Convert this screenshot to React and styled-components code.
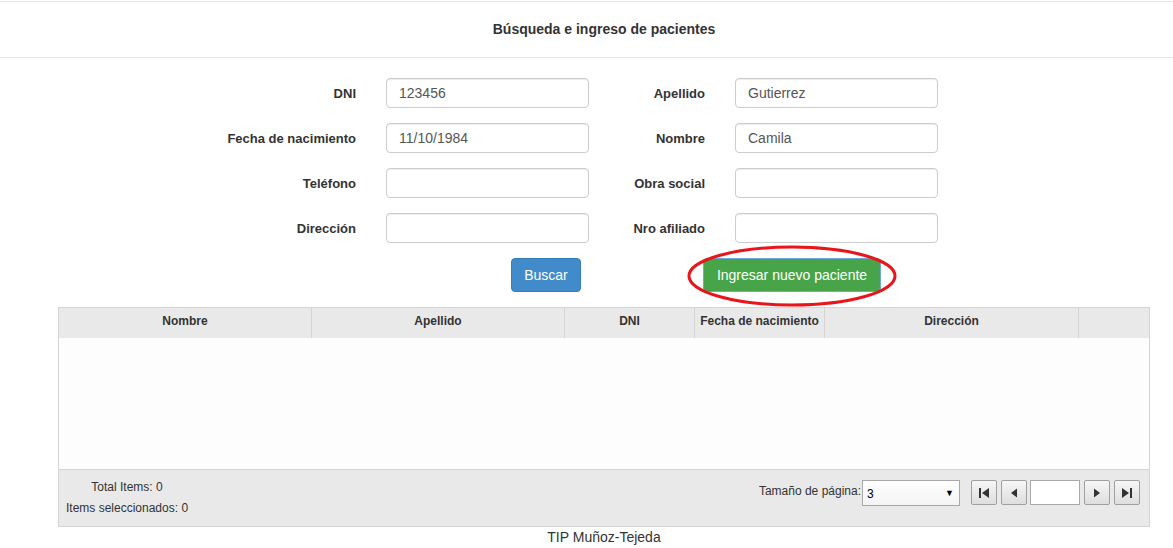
import React from "react";
import styled, { createGlobalStyle } from "styled-components";

const Global = createGlobalStyle`
  body {
    margin: 0;
    overflow: hidden;
    background: #fff;
    font-family: "Liberation Sans", Arial, sans-serif;
    color: #333;
  }
`;

const Page = styled.div`
  width: 1208px;
`;

const Header = styled.div`
  margin-top: 1px;
  border-top: 1px solid #e5e5e5;
  border-bottom: 1px solid #e5e5e5;
  height: 55px;
  line-height: 55px;
  text-align: center;
  font-size: 14px;
  font-weight: bold;
  color: #333;
`;

const FormGrid = styled.div`
  display: grid;
  grid-template-columns: 150px 203px 86px 203px;
  column-gap: 30px;
  row-gap: 15px;
  margin-top: 20px;
  padding-left: 206px;
  align-items: center;
`;

const Label = styled.label`
  text-align: right;
  font-size: 13px;
  font-weight: bold;
  color: #333;
`;

const Input = styled.input`
  box-sizing: border-box;
  width: 203px;
  height: 30px;
  border: 1px solid #ccc;
  border-radius: 4px;
  padding: 0 12px;
  font-family: "Liberation Sans", Arial, sans-serif;
  font-size: 14px;
  color: #555;
  box-shadow: inset 0 1px 1px rgba(0, 0, 0, 0.075);
  outline: none;
`;

const Actions = styled.div`
  display: flex;
  gap: 122px;
  margin-top: 15px;
  padding-left: 511px;
`;

const Button = styled.button`
  position: relative;
  box-sizing: border-box;
  height: 34px;
  padding: 0;
  white-space: nowrap;
  width: ${(p) => (p.$wide ? "178px" : "70px")};
  border-radius: 4px;
  border: 1px solid ${(p) => (p.$variant === "success" ? "#6fa7d8" : "#357ebd")};
  background: ${(p) => (p.$variant === "success" ? "#48a448" : "#428bca")};
  color: #fff;
  font-family: "Liberation Sans", Arial, sans-serif;
  font-size: 14px;
  cursor: pointer;
`;

const Circle = styled.svg`
  position: absolute;
  left: -16px;
  top: -14px;
  overflow: visible;
  pointer-events: none;
`;

const Table = styled.div`
  box-sizing: border-box;
  margin: 15px 0 0 58px;
  width: 1092px;
  border: 1px solid #d4d4d4;
`;

const HeadRow = styled.div`
  display: grid;
  grid-template-columns: 253px 253px 130px 130px 254px 1fr;
  background: #e9e9e9;
  height: 30px;
`;

const HeadCell = styled.div`
  border-right: 1px solid #d4d4d4;
  font-size: 12px;
  font-weight: bold;
  color: #333;
  text-align: center;
  line-height: 27px;
  &:last-child {
    border-right: none;
  }
`;

const Body = styled.div`
  height: 131px;
  background: #fdfdfd;
`;

const Foot = styled.div`
  display: flex;
  justify-content: space-between;
  height: 56px;
  background: #e9e9e9;
  border-top: 1px solid #d4d4d4;
  font-size: 12px;
  color: #333;
`;

const Counts = styled.div`
  padding: 7px 0 0 7px;
  text-align: center;
  line-height: 21px;
`;

const Pager = styled.div`
  display: flex;
  align-items: flex-start;
  padding: 10px 9px 0 0;
`;

const PageLabel = styled.span`
  margin-top: 4px;
  margin-right: 1px;
`;

const Select = styled.div`
  box-sizing: border-box;
  display: flex;
  align-items: flex-end;
  justify-content: space-between;
  width: 98px;
  height: 26px;
  padding: 0 5px 4px 4px;
  margin-right: 7px;
  border: 1px solid #a9a9a9;
  background: linear-gradient(#fff, #f4f4f4);
  font-size: 12px;
  color: #000;
  span:last-child {
    font-size: 9px;
    padding-bottom: 3px;
  }
`;

const NavButton = styled.button`
  box-sizing: border-box;
  width: 26px;
  height: 25px;
  margin-left: 4px;
  padding: 0;
  display: flex;
  align-items: center;
  justify-content: center;
  border: 1px solid #a0a0a0;
  border-radius: 2px;
  background: linear-gradient(#f6f6f6, #dedede);
`;

const PageInput = styled.input`
  box-sizing: border-box;
  width: 50px;
  height: 25px;
  margin-left: 3px;
  border: 1px solid #a9a9a9;
  background: #fff;
  outline: none;
`;

const Credit = styled.div`
  margin-top: 1px;
  text-align: center;
  font-size: 14px;
  line-height: 18px;
  color: #333;
`;

const NavIcon = ({ kind }) => {
  const bar = kind === "first" || kind === "last";
  const left = kind === "first" || kind === "prev";
  return (
    <svg width="12" height="12" viewBox="0 0 12 12">
      {left ? (
        <>
          {bar && <rect x="1" y="1" width="2" height="10" fill="#333" />}
          <polygon points={bar ? "11,1 11,11 4,6" : "9,1.5 9,10.5 3,6"} fill="#333" />
        </>
      ) : (
        <>
          <polygon points={bar ? "1,1 1,11 8,6" : "3,1.5 3,10.5 9,6"} fill="#333" />
          {bar && <rect x="9" y="1" width="2" height="10" fill="#333" />}
        </>
      )}
    </svg>
  );
};

const fields = [
  ["DNI", "123456", "Apellido", "Gutierrez"],
  ["Fecha de nacimiento", "11/10/1984", "Nombre", "Camila"],
  ["Teléfono", "", "Obra social", ""],
  ["Dirección", "", "Nro afiliado", ""],
];

const columns = ["Nombre", "Apellido", "DNI", "Fecha de nacimiento", "Dirección", ""];

export default function App() {
  return (
    <Page>
      <Global />
      <Header>Búsqueda e ingreso de pacientes</Header>

      <FormGrid>
        {fields.map(([l1, v1, l2, v2]) => (
          <React.Fragment key={l1}>
            <Label>{l1}</Label>
            <Input defaultValue={v1} />
            <Label>{l2}</Label>
            <Input defaultValue={v2} />
          </React.Fragment>
        ))}
      </FormGrid>

      <Actions>
        <Button>Buscar</Button>
        <Button $variant="success" $wide>
          Ingresar nuevo paciente
          <Circle width="210" height="62">
            <ellipse cx="104" cy="31" rx="103" ry="29" fill="none" stroke="#e8151b" strokeWidth="3" />
          </Circle>
        </Button>
      </Actions>

      <Table>
        <HeadRow>
          {columns.map((c, i) => (
            <HeadCell key={i}>{c}</HeadCell>
          ))}
        </HeadRow>
        <Body />
        <Foot>
          <Counts>
            <div>Total Items: 0</div>
            <div>Items seleccionados: 0</div>
          </Counts>
          <Pager>
            <PageLabel>Tamaño de página:</PageLabel>
            <Select>
              <span>3</span>
              <span>▼</span>
            </Select>
            <NavButton><NavIcon kind="first" /></NavButton>
            <NavButton><NavIcon kind="prev" /></NavButton>
            <PageInput />
            <NavButton><NavIcon kind="next" /></NavButton>
            <NavButton><NavIcon kind="last" /></NavButton>
          </Pager>
        </Foot>
      </Table>

      <Credit>TIP Muñoz-Tejeda</Credit>
    </Page>
  );
}
